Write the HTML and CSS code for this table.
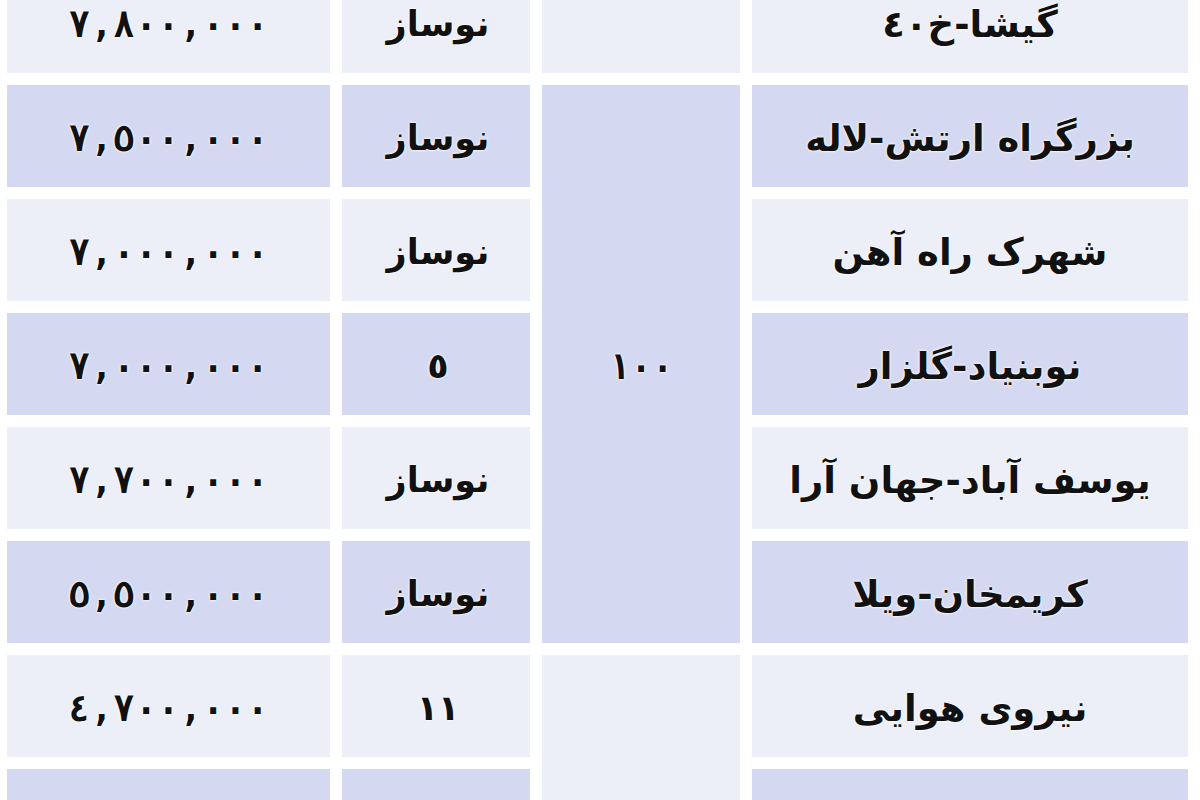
FILE: index.html
```html
<!DOCTYPE html>
<html lang="fa" dir="rtl">
<head>
<meta charset="utf-8">
<title>قیمت</title>
<link rel="stylesheet" href="styles.css">
</head>
<body>
<table class="prices">
  <tbody>
    <tr class="light">
      <td class="name">گیشا-خ٤٠</td>
      <td class="area"></td>
      <td class="age">نوساز</td>
      <td class="price">٧,٨٠٠,٠٠٠</td>
    </tr>
    <tr class="dark">
      <td class="name">بزرگراه ارتش-لاله</td>
      <td class="area merged" rowspan="5">١٠٠</td>
      <td class="age">نوساز</td>
      <td class="price">٧,٥٠٠,٠٠٠</td>
    </tr>
    <tr class="light">
      <td class="name">شهرک راه آهن</td>
      <td class="age">نوساز</td>
      <td class="price">٧,٠٠٠,٠٠٠</td>
    </tr>
    <tr class="dark">
      <td class="name">نوبنیاد-گلزار</td>
      <td class="age">٥</td>
      <td class="price">٧,٠٠٠,٠٠٠</td>
    </tr>
    <tr class="light">
      <td class="name">یوسف آباد-جهان آرا</td>
      <td class="age">نوساز</td>
      <td class="price">٧,٧٠٠,٠٠٠</td>
    </tr>
    <tr class="dark">
      <td class="name">کریمخان-ویلا</td>
      <td class="age">نوساز</td>
      <td class="price">٥,٥٠٠,٠٠٠</td>
    </tr>
    <tr class="light">
      <td class="name">نیروی هوایی</td>
      <td class="area merged-light" rowspan="2"></td>
      <td class="age">١١</td>
      <td class="price">٤,٧٠٠,٠٠٠</td>
    </tr>
    <tr class="dark">
      <td class="name"></td>
      <td class="age"></td>
      <td class="price"></td>
    </tr>
  </tbody>
</table>
</body>
</html>
```

FILE: styles.css
```css
html, body {
  margin: 0;
  padding: 0;
  background: #ffffff;
  overflow: hidden;
}

body {
  width: 1200px;
  height: 800px;
  font-family: "DejaVu Sans", "Noto Sans", sans-serif;
  color: #111111;
}

.prices {
  border-collapse: separate;
  border-spacing: 12px;
  margin: -41px 0 0 0;
  width: 1204px;
  table-layout: fixed;
}

.prices td {
  height: 102px;
  padding: 4px 0 0 0;
  box-sizing: border-box;
  text-align: center;
  vertical-align: middle;
  font-weight: bold;
  text-shadow: 0 0 3px #ffffff, 0 0 2px #ffffff;
}

.prices .name { width: 436px; font-size: 37px; }
.prices .area { width: 198px; font-size: 36px; font-family: "DejaVu Sans Mono", "DejaVu Sans", monospace; }
.prices .age { width: 188px; font-size: 35px; padding-left: 4px; }
.prices .price { width: 323px; font-size: 37px; font-family: "DejaVu Sans Mono", "DejaVu Sans", monospace; }

.light td { background: #eceef8; }
.dark td { background: #d4d9f1; }

.prices td.merged { background: #d4d9f1; }
.prices td.merged-light { background: #eceef8; }
```
